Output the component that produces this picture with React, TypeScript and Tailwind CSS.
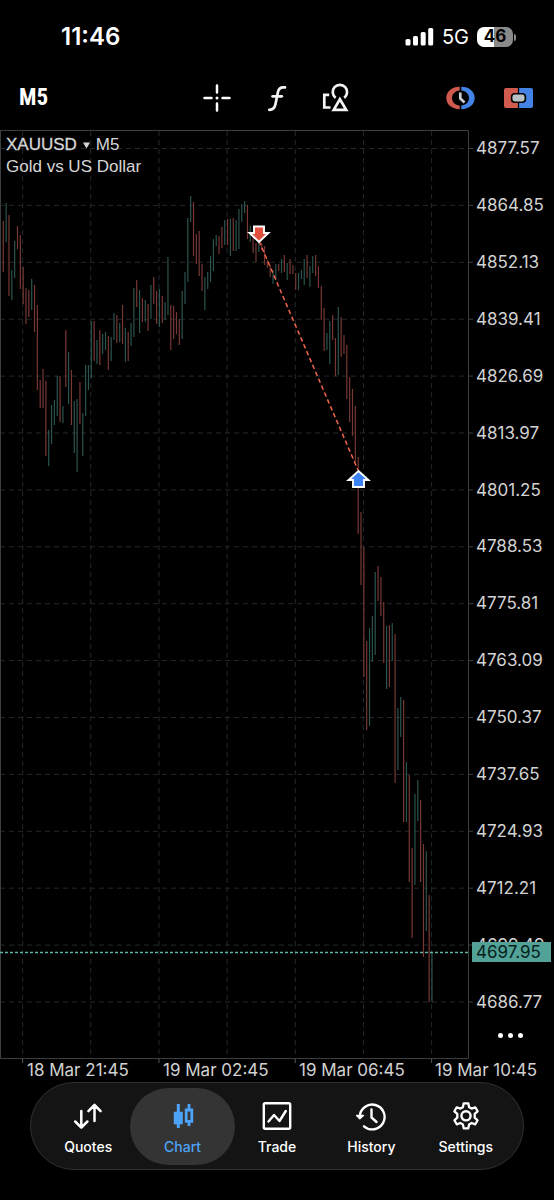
import React from "react";

type Candle = [low: number, high: number, rising: 0 | 1];

// Upper edge, lower edge and direction (1 = rising) of each bar, in chart units.
const candles: Candle[] = [
  [221, 272, 0], [203, 242, 1], [215, 296, 0], [270, 300, 1], [241, 278, 1], [226, 249, 0], [235, 289, 0], [267, 304, 0],
  [288, 324, 0], [290, 317, 0], [279, 310, 1], [285, 332, 0], [305, 390, 0], [380, 408, 0], [369, 408, 0], [381, 456, 0],
  [430, 466, 1], [405, 444, 1], [400, 425, 1], [376, 416, 1], [376, 422, 0], [406, 423, 1], [330, 387, 0], [352, 404, 1],
  [370, 425, 0], [401, 453, 1], [399, 472, 1], [382, 424, 0], [413, 456, 1], [365, 416, 1], [365, 390, 1], [321, 378, 1],
  [321, 361, 0], [340, 364, 1], [330, 365, 0], [334, 354, 1], [332, 350, 1], [336, 370, 0], [337, 361, 1], [313, 340, 1],
  [315, 343, 0], [323, 342, 1], [305, 344, 0], [328, 362, 1], [332, 361, 0], [323, 346, 1], [288, 337, 1], [280, 307, 0],
  [290, 333, 1], [298, 322, 0], [300, 322, 1], [304, 331, 0], [285, 319, 1], [277, 304, 0], [291, 324, 0], [289, 327, 1],
  [296, 323, 0], [302, 320, 1], [257, 315, 1], [305, 350, 0], [306, 339, 0], [312, 334, 0], [319, 345, 0], [291, 339, 1],
  [272, 304, 1], [218, 282, 1], [196, 222, 1], [202, 256, 0], [234, 264, 0], [231, 276, 0], [264, 291, 0], [277, 310, 1],
  [272, 289, 1], [256, 282, 1], [239, 271, 1], [235, 246, 1], [236, 254, 0], [227, 248, 0], [220, 245, 1], [219, 245, 0],
  [219, 256, 1], [218, 251, 0], [220, 251, 1], [209, 249, 1], [204, 222, 1], [201, 213, 1], [205, 239, 0], [226, 242, 1],
  [237, 253, 0], [243, 262, 0], [240, 252, 1], [243, 250, 0], [246, 265, 0], [260, 268, 0], [265, 277, 0], [270, 284, 1],
  [264, 280, 1], [264, 271, 0], [259, 273, 1], [255, 272, 0], [263, 280, 1], [259, 274, 0], [265, 274, 0], [273, 290, 0],
  [273, 290, 1], [270, 279, 1], [259, 285, 1], [255, 278, 0], [266, 287, 1], [256, 273, 1], [255, 276, 0], [266, 288, 0],
  [286, 320, 0], [308, 351, 0], [333, 350, 1], [321, 364, 1], [315, 340, 0], [338, 376, 0], [307, 375, 1], [317, 357, 0],
  [335, 354, 0], [345, 399, 0], [377, 422, 0], [389, 436, 0], [406, 462, 0], [457, 534, 0], [512, 585, 0], [547, 677, 0],
  [641, 730, 0], [628, 726, 1], [616, 662, 1], [572, 655, 1], [566, 601, 0], [577, 616, 0], [602, 663, 0], [626, 689, 1],
  [625, 687, 0], [623, 661, 1], [634, 783, 0], [708, 770, 1], [697, 737, 1], [700, 822, 0], [762, 822, 1], [775, 882, 0],
  [848, 938, 0], [794, 885, 1], [780, 821, 1], [800, 882, 0], [844, 957, 0], [851, 931, 1], [895, 1002, 0], [953, 1002, 1],
];

const prices = [
  "4877.57", "4864.85", "4852.13", "4839.41", "4826.69", "4813.97", "4801.25", "4788.53",
  "4775.81", "4763.09", "4750.37", "4737.65", "4724.93", "4712.21", "4699.49", "4686.77",
];

const times = ["18 Mar 21:45", "19 Mar 02:45", "19 Mar 06:45", "19 Mar 10:45"];

const rowY = prices.map((_, i) => 148.5 + i * 56.9);
const columnX = Array.from({ length: 7 }, (_, i) => 22.6 + i * 68.17);

function StatusBar() {
  return (
    <header className="flex h-[74px] items-center justify-between pr-[38px] pl-[61px]">
      <time className="text-[24px] font-semibold">11:46</time>
      <div className="flex items-center gap-2">
        <svg width="29" height="18" viewBox="0 0 29 18" fill="#fff" aria-label="Signal">
          <rect x="0.5" y="11" width="5" height="6.5" rx="1.5" />
          <rect x="8" y="8" width="5" height="9.5" rx="1.5" />
          <rect x="15.7" y="4" width="5" height="13.5" rx="1.5" />
          <rect x="23.2" y="0" width="5" height="17.5" rx="1.5" />
        </svg>
        <span className="text-[20px]">5G</span>
        <div className="flex items-center gap-px">
          <span className="flex h-5 w-9 items-center justify-center rounded-[7px] bg-linear-to-r from-white from-47% to-[#8a8a8a] to-47% text-[17px] font-bold text-black">
            46
          </span>
          <span className="h-[7px] w-[2px] rounded-r-full bg-[#8a8a8a]" />
        </div>
      </div>
    </header>
  );
}

function Toolbar() {
  return (
    <nav className="flex h-14 items-center pb-2 pr-[21px] pl-[19px]" aria-label="Chart tools">
      <button className="w-[181px] text-left font-['Liberation_Sans_Narrow','Roboto_Condensed',Roboto,sans-serif] text-[23px] font-bold">
        M5
      </button>
      <div className="flex items-center gap-[30px]">
        <button aria-label="Crosshair">
          <svg width="34" height="34" viewBox="0 0 34 34" stroke="#fff" strokeWidth="2.5" strokeLinecap="round">
            <path d="M17 4.500v7M17 22.500v7M4.500 17h7M22.500 17h7" />
            <circle cx="17" cy="17" r="1.5" fill="#fff" stroke="none" />
          </svg>
        </button>
        <button aria-label="Indicators">
          <svg width="26" height="34" viewBox="0 0 26 34" fill="none" stroke="#f4f4f4" strokeWidth="2.700" strokeLinecap="round">
            <path d="M21 6.400h-1.800c-3 0-4.600 1.600-5.300 4.800l-2.500 12.400c-.8 3.700-2.400 5.300-6.100 5.200" />
            <path d="M8.600 15.300h9.200" />
          </svg>
        </button>
        <button aria-label="Objects">
          <svg width="30" height="34" viewBox="0 0 30 34" fill="none" stroke="#f4f4f4" strokeWidth="2.700">
            <path d="M9.200 13.900H4.300v12.600H10.500" />
            <path d="M15.600 16.800a7.200 7.200 0 1 1 8.600 0" />
            <path d="M19.900 18.200 13.700 28.900h12.500z" />
          </svg>
        </button>
      </div>
      <div className="ml-auto flex items-center gap-[29px]">
        <button aria-label="Trading sessions">
          <svg width="29" height="24" viewBox="0 0 29 24" fill="none">
            <path d="M13.700 .800C6 .8.300 5.500.3 12S6 23.200 13.700 23.200v-3.600C9 19.200 6 16 6 12s3-7.200 7.700-7.600z" fill="#cf5a4d" />
            <path d="M15.300.8C23 .8 28.700 5.500 28.700 12S23 23.200 15.300 23.200v-3.600C20 19.200 23 16 23 12s-3-7.200-7.700-7.600z" fill="#4483e6" />
            <path d="M14.300 6.500v6l4.200 4" stroke="#c5cbd0" strokeWidth="2.700" />
          </svg>
        </button>
        <button aria-label="One click trading">
          <svg width="29" height="20" viewBox="0 0 29 20">
            <path d="M2 0h11.900v20H2a2 2 0 0 1-2-2V2a2 2 0 0 1 2-2z" fill="#cf5a4d" />
            <path d="M15.100 0H27a2 2 0 0 1 2 2v16a2 2 0 0 1-2 2H15.100z" fill="#4483e6" />
            <rect x="7.600" y="5.700" width="13.800" height="8.600" rx="3.200" fill="#b9c0c6" stroke="#000" strokeWidth="1.600" />
          </svg>
        </button>
      </div>
    </nav>
  );
}

function PriceChart() {
  return (
    <svg
      className="min-w-0 flex-1 overflow-visible"
      viewBox="0 130 469 929"
      preserveAspectRatio="none"
      role="img"
      aria-label="XAUUSD five minute bars"
      fill="none"
    >
      <g stroke="#24282a" strokeDasharray="5 4">
        {rowY.map((y) => (
          <line key={y} x1="0" x2="469" y1={y} y2={y} />
        ))}
        {columnX.map((x) => (
          <line key={x} x1={x} x2={x} y1="131" y2="1058" />
        ))}
      </g>
      <path d="M0 130.500H468.500V1058.500H0M0.500 130V1059" stroke="#3c3e40" />
      {rowY.map((y) => (
        <line key={y} x1="469" x2="473" y1={y} y2={y} stroke="#3c3e40" />
      ))}
      {columnX
        .filter((_, i) => i % 2 === 0)
        .map((x) => (
          <line key={x} x1={x} x2={x} y1="1059" y2="1063" stroke="#55585a" />
        ))}
      {candles.map(([top, bottom, rising], i) => (
        <line
          key={i}
          x1={3.3 + i * 2.839}
          x2={3.3 + i * 2.839}
          y1={top}
          y2={bottom}
          stroke={rising ? "#2b544e" : "#773833"}
          strokeWidth="1.2"
        />
      ))}
      <path d="M0 952.500H469" stroke="#5fb5a5" strokeWidth="1.300" strokeDasharray="3 2" />
      <path d="M259 241 358 470" stroke="#f2644d" strokeWidth="1.500" strokeDasharray="4.500 3" />
      <path d="M254 226.500h10v6.500h4.500L259 242l-9.500-9h4.500z" fill="#e3503e" stroke="#fff" strokeWidth="1.900" />
      <path d="M353 487h11v-7h4.500L358.500 471l-10 9h4.500z" fill="#3b82f6" stroke="#fff" strokeWidth="1.900" />
    </svg>
  );
}

function PriceScale() {
  return (
    <div className="relative flex w-[85px] shrink-0 flex-col pt-2 pl-[7px] text-[17px] text-[#d2d2d2]">
      <ol className="flex flex-1 flex-col justify-between">
        {prices.map((p) => (
          <li key={p} className="h-5 leading-5">
            {p}
          </li>
        ))}
      </ol>
      <div className="flex h-[47px] items-center">
        <button aria-label="More" className="ml-[22px] flex gap-[5px]">
          <i className="size-[5px] rounded-full bg-white" />
          <i className="size-[5px] rounded-full bg-white" />
          <i className="size-[5px] rounded-full bg-white" />
        </button>
      </div>
      <output className="absolute top-[88.500%] left-[3px] h-5 w-[79px] -translate-y-1/2 bg-[#52a297] pl-1 leading-5 text-[#06201c]">
        4697.95
      </output>
    </div>
  );
}

const tabIcons = {
  Quotes: (
    <path d="M8.300 10v16.500M2.200 20.500l6.100 6.200 6.100-6.200M21.500 20V4M15.400 10.200l6.100-6.200 6.100 6.200" strokeWidth="2.500" />
  ),
  Chart: (
    <>
      <path d="M5.800 10.800h9v12.400h-9zM8.800 3h3v24h-3z" fill="currentColor" stroke="none" />
      <path d="M18.200 9h5.600v11.300h-5.600z" strokeWidth="2.800" strokeLinejoin="miter" />
      <path d="M19.600 3h2.800v5h-2.800zM19.600 21h2.800v4h-2.800z" fill="currentColor" stroke="none" />
    </>
  ),
  Trade: (
    <>
      <rect x="1.800" y="2.300" width="26.400" height="25.400" rx="1.500" strokeWidth="2.400" />
      <path d="m6.500 20.500 5.500-6.500 5.500 6 6.300-10" strokeWidth="2.400" />
    </>
  ),
  History: (
    <>
      <path d="M3.800 15.500A12.400 12.400 0 1 1 8 25.300" strokeWidth="2.400" />
      <path d="m.600 14.500 3.200 3.300 3.600-3.300z" fill="currentColor" strokeWidth="1.500" />
      <path d="M15.500 8.500v8l5 4.500" strokeWidth="2.400" />
    </>
  ),
  Settings: (
    <>
      <path
        d="m12.700 2.300h4.600l.8 3.900 2.500 1.400 3.700-1.300 2.300 4-2.900 2.600v3.800l2.900 2.600-2.300 4-3.700-1.300-2.500 1.400-.8 3.900h-4.600l-.8-3.900-2.500-1.400-3.700 1.300-2.300-4 2.900-2.600v-3.800l-2.900-2.600 2.300-4 3.700 1.300 2.500-1.400z"
        strokeWidth="2.300"
      />
      <circle cx="15" cy="14.800" r="4.600" strokeWidth="2.400" />
    </>
  ),
};

function TabBar({ active }: { active: string }) {
  return (
    <nav
      aria-label="Main"
      className="mx-[30px] mb-[30px] grid h-[88px] grid-cols-5 items-center rounded-full border border-[#303030] bg-[#141414] px-[10px]"
    >
      {Object.entries(tabIcons).map(([name, icon]) => (
        <a
          key={name}
          href={`#${name.toLowerCase()}`}
          aria-current={name === active ? "page" : undefined}
          className={
            name === active
              ? "-mx-[5px] flex h-[77px] flex-col items-center justify-center gap-[7px] rounded-full bg-[#343434] pt-1 text-[#4da3f8]"
              : "flex h-[77px] flex-col items-center justify-center gap-[7px] pt-1 text-white"
          }
        >
          <svg width="30" height="30" viewBox="0 0 30 30" fill="none" stroke="currentColor" strokeLinecap="round" strokeLinejoin="round">
            {icon}
          </svg>
          <span className="text-[14px] leading-[18px] font-medium">{name}</span>
        </a>
      ))}
    </nav>
  );
}

export default function App() {
  return (
    <div className="flex min-h-screen flex-col overflow-hidden bg-black font-[Inter,sans-serif] text-white">
      <StatusBar />
      <Toolbar />
      <main className="relative flex flex-1">
        <PriceChart />
        <PriceScale />
        <h1 className="absolute top-1 left-[6px] font-['Liberation_Sans',Arial,sans-serif] text-[17px] leading-[22px] text-[#d6d6d6]">
          <span className="flex items-center">
            <span className="[-webkit-text-stroke:0.3px]">XAUUSD</span>
            <svg className="mx-[6px]" width="7" height="7" viewBox="0 0 7 7" fill="#d6d6d6">
              <path d="M0 .5h7L3.500 6.500z" />
            </svg>
            <span>M5</span>
          </span>
          <span className="block">Gold vs US Dollar</span>
        </h1>
      </main>
      <ol className="flex h-[23px] items-center overflow-hidden pl-[27px] text-[17px] text-[#d2d2d2]">
        {times.map((t) => (
          <li key={t} className="w-[136px] shrink-0 whitespace-nowrap">
            {t}
          </li>
        ))}
      </ol>
      <TabBar active="Chart" />
    </div>
  );
}
